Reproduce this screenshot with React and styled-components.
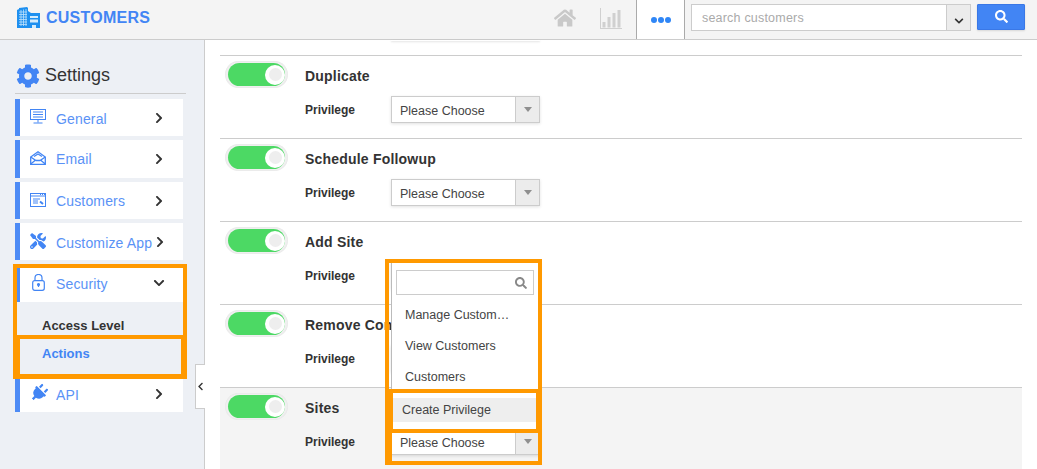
import React from "react";
import styled, { createGlobalStyle } from "styled-components";
import { FaCog, FaHome, FaTools, FaPlug, FaChevronRight, FaChevronDown, FaChevronLeft, FaSearch } from "react-icons/fa";

const Global = createGlobalStyle`
  html, body { margin: 0; padding: 0; height: 469px; overflow: hidden; background: #fff; }
  body { font-family: "Liberation Sans", Arial, sans-serif; color: #333; }
  * { box-sizing: border-box; }
`;

const Page = styled.div`position: relative; width: 1037px; height: 469px; overflow: hidden;`;
const TopBar = styled.header`
  display: flex; align-items: stretch; height: 40px; background: #f4f4f4; border-bottom: 1px solid #ccc;
`;
const Brand = styled.div`
  display: flex; align-items: center; gap: 5px; padding: 0 0 4px 17px;
  font-size: 16px; font-weight: 700; color: #4285f4; letter-spacing: .25px;
`;
const TopRight = styled.div`display: flex; align-items: stretch; margin-left: auto; padding-right: 12px;`;
const GhostIcon = styled.div`
  display: flex; align-items: center; justify-content: center; color: #c9c9c9; width: ${p => p.$w}px;
  margin-right: ${p => p.$mr || 0}px; padding-bottom: 3px;
`;
const DotsTab = styled.div`
  display: flex; align-items: center; justify-content: center; gap: 1px; width: 49px; background: #fff;
  border-left: 1px solid #aaa; border-right: 1px solid #aaa; margin-left: 14px;
`;
const Dot = styled.span`width: 6px; height: 6px; border-radius: 50%; background: #2f86f6;`;
const SearchGroup = styled.div`display: flex; align-items: flex-start; margin: 4px 0 0 6px; height: 27px;`;
const SearchInput = styled.div`
  width: 255px; height: 27px; background: #fff; border: 1px solid #ccc; border-right: 0; padding-left: 10px;
  font-size: 12.5px; line-height: 26px; color: #aaa; letter-spacing: .2px;
`;
const SearchCaret = styled.div`
  width: 25px; height: 27px; background: #ececec; border: 1px solid #ccc; color: #333;
  display: flex; align-items: center; justify-content: center; padding-top: 6px;
`;
const SearchButton = styled.button`
  width: 48px; height: 26px; margin-left: 6px; padding: 0 0 2px; border: 1px solid #3a78e6; border-radius: 1px; background: #4285f4;
  color: #fff; display: flex; align-items: center; justify-content: center; box-shadow: 0 1px 2px rgba(0,0,0,.12);
`;

const Body = styled.div`display: flex; height: 429px;`;
const Sidebar = styled.aside`
  position: relative; width: 205px; flex: none; background: #edf0f5; border-right: 1px solid #ccc; padding: 20px 0 0 15px;
`;
const SideHead = styled.div`
  display: flex; align-items: center; gap: 5px; width: 171px; height: 34px; margin-bottom: 5px; border-bottom: 1px solid #ccc;
  font-size: 18px; color: #333; padding: 0 0 2px 1px;
`;
const Item = styled.div`
  display: flex; align-items: center; width: 168px; height: ${p => p.$h || 37}px; margin-bottom: ${p => p.$mb ?? 4}px;
  background: #fff; border-left: 5px solid #4d8bf5; padding: 0 16px 0 10px; color: #5a92f6; font-size: 14px; letter-spacing: .15px;
`;
const ItemIcon = styled.span`
  display: flex; width: 26px; flex: none; color: #4285f4; align-items: center; margin-bottom: 2px;
  padding-left: ${p => p.$pad || 0}px;
  svg { transform: rotate(${p => p.$rot || 0}deg); }
`;
const ItemLabel = styled.span`padding-top: ${p => p.$top ?? 2}px; white-space: nowrap;`;
const ItemArrow = styled.span`display: flex; flex: none; justify-content: center; width: 16px; margin-left: auto; color: #333;`;
const SubMenu = styled.div`padding: 10px 0 8px 27px;`;
const SubItem = styled.div`
  height: ${p => p.$h || 27}px; line-height: ${p => p.$h || 27}px; font-size: 13px; font-weight: 700; color: ${p => p.$active ? "#4285f4" : "#333"};
`;
const Collapse = styled.div`
  position: absolute; left: 195px; top: 324px; width: 10px; height: 45px; background: #fff; border: 1px solid #ccc; border-right: 0;
  display: flex; align-items: center; justify-content: center; color: #333;
`;

const Main = styled.main`flex: 1; padding: 0 15px; min-width: 0;`;
const StubCard = styled.div`
  width: 149px; height: 1px; margin: 0 0 14px 171px; box-shadow: 0 1px 2px rgba(0,0,0,.15);
`;
const Row = styled.section`
  display: flex; height: 83px; border-top: 1px solid #ccc; padding: 5px 0 0 5px; background: ${p => p.$shade ? "#f4f4f4" : "#fff"};
`;
const Toggle = styled.div`
  width: 63px; height: 27px; flex: none; border-radius: 14px; background: #f0f0f0; padding: 2px 3px;
  box-shadow: inset 0 0 2px rgba(0,0,0,.08);
`;
const Track = styled.div`
  display: flex; justify-content: flex-end; align-items: center; height: 23px; border-radius: 12px; background: #4cd964;
`;
const Knob = styled.div`
  display: flex; align-items: center; justify-content: center; width: 20px; height: 20px; border-radius: 50%; background: #fff;
  &::after { content: ""; width: 13px; height: 13px; border-radius: 50%; background: #eee; }
`;
const Details = styled.div`padding: 5px 0 0 17px; flex: 1;`;
const Title = styled.div`height: 20px; line-height: 20px; font-size: 14px; font-weight: 700; letter-spacing: .2px; color: #333;`;
const PrivRow = styled.div`display: flex; align-items: center; margin-top: 10px;`;
const PrivLabel = styled.div`width: 86px; font-size: 12px; font-weight: 700; color: #333;`;
const Select = styled.div`
  position: relative; display: flex; width: 149px; height: 27px; background: #fff; border: 1px solid #ccc;
  box-shadow: 0 1px 3px rgba(0,0,0,.12); font-size: 12.5px; color: #444;
`;
const SelectText = styled.div`flex: 1; padding-left: 8px; line-height: 28px;`;
const SelectArrow = styled.div`
  width: 24px; background: #ececec; border-left: 1px solid #ccc; display: flex; align-items: center; justify-content: center;
  &::after { content: ""; border: 4px solid transparent; border-top: 5px solid #8f8f8f; border-bottom: 0; }
`;
const Popup = styled.div`
  position: absolute; left: -1px; bottom: 100%; width: 147px; height: 166px; background: #fff; border-left: 1px solid #bbb;
  display: flex; flex-direction: column; padding-top: 7px;
`;
const PopupSearch = styled.div`
  display: flex; align-items: center; justify-content: flex-end; height: 25px; margin: 0 4px 5px; border: 1px solid #ccc; padding-right: 6px; color: #888;
`;
const PopupItem = styled.div`
  height: 31px; line-height: 31px; padding-left: 13px; font-size: 12.5px; color: #444;
`;
const CreateItem = styled.div`
  height: 24px; line-height: 24px; margin-top: 5px; padding-left: 10px; background: #eee; font-size: 12.5px; color: #444;
`;
const Mark = styled.div`
  position: absolute; pointer-events: none; border-style: solid; border-color: #ff9900;
  left: ${p => p.$x}px; top: ${p => p.$y}px; width: ${p => p.$w}px; height: ${p => p.$h}px;
  border-width: ${p => p.$b || "4px"};
`;

const Logo = () => (
  <svg width="24" height="21" viewBox="0 0 24 21">
    <path d="M0 3 L2 2 V1 L10 0 L11 1 V4 L14 6 H23 V21 H0 Z" fill="#1e90f0" />
    <g stroke="#bfe2fb" strokeWidth=".8">
      <path d="M2 5H10M2 7.500H10M2 10H10M2 12.500H10M2 15H10M2 17.500H10M4 3V19M6.500 2.500V19M9 2V19" />
    </g>
    <rect x="13" y="9" width="8" height="2" fill="#d5ecfc" />
    <rect x="13" y="12.500" width="8" height="3" fill="#d5ecfc" />
    <rect x="15" y="18" width="4" height="3" fill="#d5ecfc" />
  </svg>
);
const Chart = () => (
  <svg width="22" height="21" viewBox="0 0 22 21" fill="#d0d0d0">
    <path d="M0 0h1v20h21v1H0z" />
    <rect x="2.500" y="14" width="3" height="5.500" /><rect x="7.500" y="9" width="3" height="10.500" />
    <rect x="12.500" y="5" width="3" height="14.500" /><rect x="17.500" y="2" width="3" height="17.500" />
  </svg>
);
const Monitor = () => (
  <svg width="16" height="15" viewBox="0 0 16 15" fill="none" stroke="#4285f4">
    <rect x=".5" y=".5" width="15" height="10" />
    <path d="M3 3H13M3 5.500H13M3 8H13M8 11V13.500M3.500 14H12.500" />
  </svg>
);
const Mail = () => (
  <svg width="16" height="14" viewBox="0 0 16 14" fill="none" stroke="#4285f4" strokeWidth="1.300">
    <path d="M.7 6 L8 .8 L15.300 6 V13.300 H.7 Z" />
    <path d="M.7 6 L6 9.500 H10 L15.300 6 M.7 13 L5 9.500 M15.300 13 L11 9.500 M4 5.500 L8 3 L12 5.500" />
  </svg>
);
const WindowIcon = () => (
  <svg width="16" height="14" viewBox="0 0 16 14" fill="none" stroke="#4285f4">
    <rect x=".5" y=".5" width="15" height="13" />
    <path d="M0 3H16M3 6H10M3 8H8M3 10H8" />
    <path d="M10 1.500h1M12 1.500h1M14 1.500h1" />
    <path d="M10 8.500 L13 11" strokeWidth="2" />
  </svg>
);
const Lock = () => (
  <svg width="13" height="17" viewBox="0 0 13 17" fill="none" stroke="#4285f4" strokeWidth="1.200">
    <path d="M3 7V4a3.500 3.500 0 0 1 7 0V7" />
    <rect x=".7" y="6.700" width="11.600" height="9.600" rx="2" />
    <circle cx="6.500" cy="10.500" r="1" fill="#4285f4" /><path d="M6.500 11V13" />
  </svg>
);

const rows = ["Duplicate", "Schedule Followup", "Add Site", "Remove Contact"];
const Right = () => <ItemArrow><FaChevronRight size={12} /></ItemArrow>;

export default function App() {
  return (
    <Page>
      <Global />
      <TopBar>
        <Brand><Logo />CUSTOMERS</Brand>
        <TopRight>
          <GhostIcon $w={22} $mr={24}><FaHome size={24} /></GhostIcon>
          <GhostIcon $w={22}><Chart /></GhostIcon>
          <DotsTab><Dot /><Dot /><Dot /></DotsTab>
          <SearchGroup>
            <SearchInput>search customers</SearchInput>
            <SearchCaret><FaChevronDown size={10} /></SearchCaret>
            <SearchButton><FaSearch size={13} /></SearchButton>
          </SearchGroup>
        </TopRight>
      </TopBar>
      <Body>
        <Sidebar>
          <SideHead><FaCog size={24} color="#4285f4" />Settings</SideHead>
          <Item><ItemIcon><Monitor /></ItemIcon><ItemLabel>General</ItemLabel><Right /></Item>
          <Item $h={38}><ItemIcon><Mail /></ItemIcon><ItemLabel $top={0}>Email</ItemLabel><Right /></Item>
          <Item><ItemIcon><WindowIcon /></ItemIcon><ItemLabel $top={0}>Customers</ItemLabel><Right /></Item>
          <Item><ItemIcon><FaTools size={16} /></ItemIcon><ItemLabel>Customize App</ItemLabel><Right /></Item>
          <Item $h={38} $mb={0}><ItemIcon $pad={2}><Lock /></ItemIcon><ItemLabel>Security</ItemLabel><ItemArrow><FaChevronDown size={12} /></ItemArrow></Item>
          <SubMenu>
            <SubItem $h={28}>Access Level</SubItem>
            <SubItem $active>Actions</SubItem>
          </SubMenu>
          <Item><ItemIcon $rot={45}><FaPlug size={18} /></ItemIcon><ItemLabel>API</ItemLabel><Right /></Item>
          <Collapse><FaChevronLeft size={9} /></Collapse>
        </Sidebar>
        <Main>
          <StubCard />
          {rows.map(t => (
            <Row key={t}>
              <Toggle><Track><Knob /></Track></Toggle>
              <Details>
                <Title>{t}</Title>
                <PrivRow>
                  <PrivLabel>Privilege</PrivLabel>
                  <Select><SelectText>Please Choose</SelectText><SelectArrow /></Select>
                </PrivRow>
              </Details>
            </Row>
          ))}
          <Row $shade>
            <Toggle><Track><Knob /></Track></Toggle>
            <Details>
              <Title>Sites</Title>
              <PrivRow>
                <PrivLabel>Privilege</PrivLabel>
                <Select>
                  <SelectText>Please Choose</SelectText><SelectArrow />
                  <Popup>
                    <PopupSearch><FaSearch size={12} /></PopupSearch>
                    <PopupItem>Manage Custom…</PopupItem>
                    <PopupItem>View Customers</PopupItem>
                    <PopupItem>Customers</PopupItem>
                    <CreateItem>Create Privilege</CreateItem>
                  </Popup>
                </Select>
              </PrivRow>
            </Details>
          </Row>
        </Main>
      </Body>
      <Mark $x={13} $y={264} $w={174} $h={75} />
      <Mark $x={13} $y={335} $w={174} $h={44} $b="4px 6px 5px 7px" />
      <Mark $x={385} $y={259} $w={157} $h={134} />
      <Mark $x={385} $y={389} $w={157} $h={44} $b="4px 6px 4px 8px" />
      <Mark $x={385} $y={429} $w={157} $h={36} $b="4px 4px 4px 7px" />
    </Page>
  );
}
